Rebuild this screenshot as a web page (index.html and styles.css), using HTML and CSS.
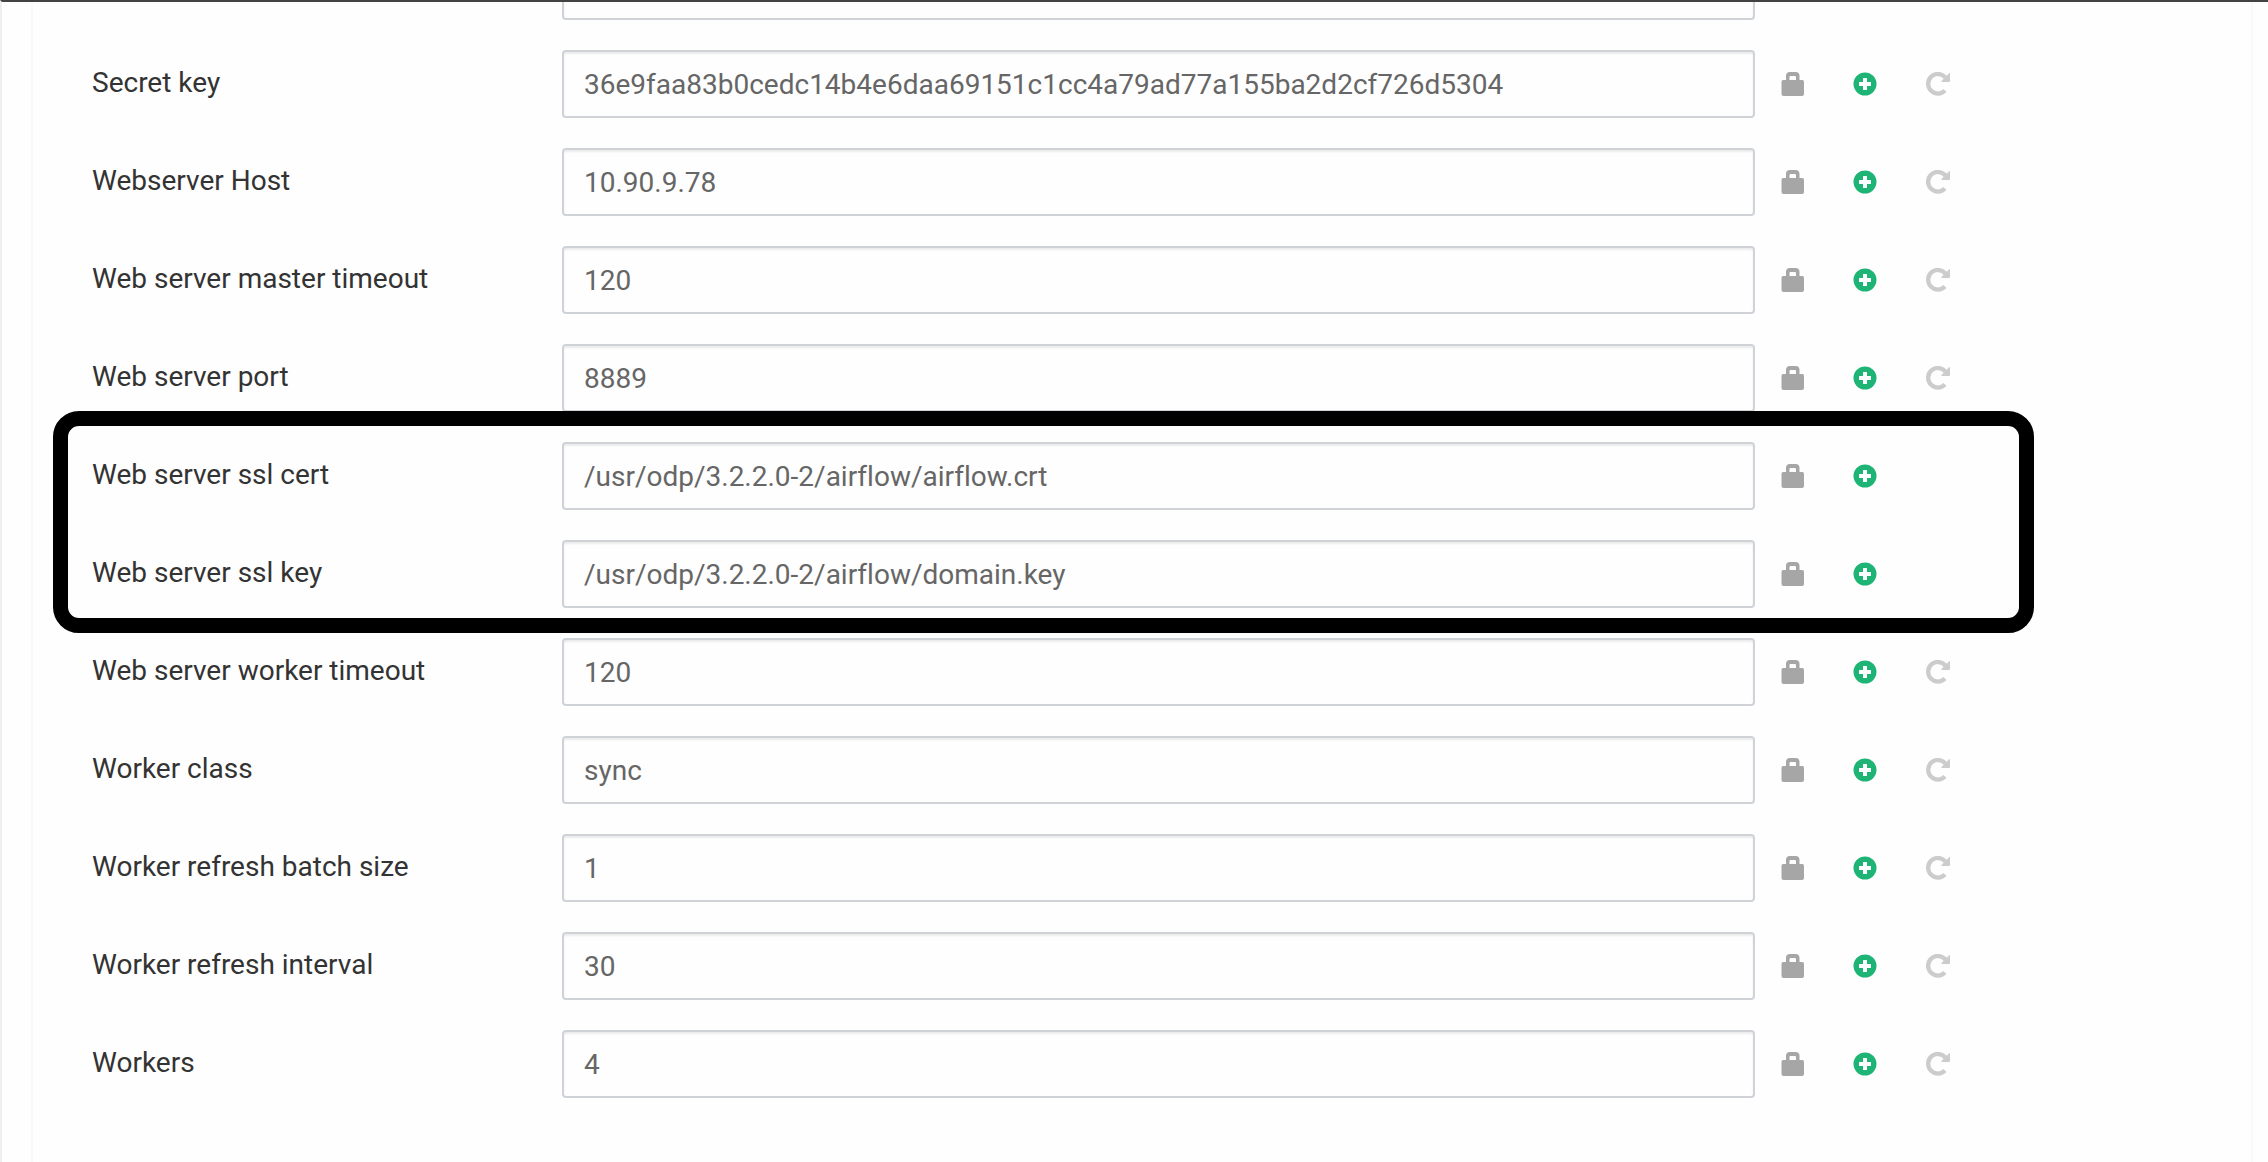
FILE: index.html
```html
<!DOCTYPE html>
<html lang="en">
<head>
    <meta charset="UTF-8" />
    <title>Airflow configs</title>
    <link rel="stylesheet" href="styles.css">
</head>
<body>
    <svg class="sprite" aria-hidden="true">
        <symbol id="lock" viewBox="0 0 24 24">
            <path fill-rule="evenodd" d="M2 8H5V4Q5 0 9 0H14.500Q18.500 0 18.500 4V8H21.500Q23 8 23 10V22Q23 24 21 24H2.500Q.5 24 .5 22V10Q.5 8 2 8ZM8.500 8H15V5Q15 4 14 4H9.500Q8.500 4 8.500 5Z"/>
        </symbol>
        <symbol id="plus" viewBox="0 0 24 24">
            <path fill-rule="evenodd" d="M12 .5A11.500 11.500 0 1 1 12 23.500A11.500 11.500 0 1 1 12 .5ZM10.500 6Q10 6 10 6.500V10H6.500Q6 10 6 10.500V13.500Q6 14 6.500 14H10V17.500Q10 18 10.500 18H13.500Q14 18 14 17.500V14H17.500Q18 14 18 13.500V10.500Q18 10 17.500 10H14V6.500Q14 6 13.500 6Z"/>
        </symbol>
        <symbol id="redo" viewBox="0 0 26 24">
            <path d="M20.500 5.500A9.800 9.800 0 1 0 20 18.600" fill="none" stroke="currentColor" stroke-width="4.300"/>
            <path d="M24.200 1.200Q25 .6 25 1.800V9Q25 10 24 10H17Q15.700 10 16.500 9Z"/>
        </symbol>
    </svg>

    <form class="panel">
        <div class="row">
            <span></span>
            <input type="text" aria-label="Previous config">
        </div>
        <div class="row">
            <label for="secret-key">Secret key</label>
            <input type="text" id="secret-key" value="36e9faa83b0cedc14b4e6daa69151c1cc4a79ad77a155ba2d2cf726d5304">
            <div class="actions">
                <button type="button" class="lock" aria-label="Lock"><svg><use href="#lock"/></svg></button>
                <button type="button" class="plus" aria-label="Override"><svg><use href="#plus"/></svg></button>
                <button type="button" class="redo" aria-label="Reset"><svg><use href="#redo"/></svg></button>
            </div>
        </div>
        <div class="row">
            <label for="host">Webserver Host</label>
            <input type="text" id="host" value="10.90.9.78">
            <div class="actions">
                <button type="button" class="lock" aria-label="Lock"><svg><use href="#lock"/></svg></button>
                <button type="button" class="plus" aria-label="Override"><svg><use href="#plus"/></svg></button>
                <button type="button" class="redo" aria-label="Reset"><svg><use href="#redo"/></svg></button>
            </div>
        </div>
        <div class="row">
            <label for="master-timeout">Web server master timeout</label>
            <input type="text" id="master-timeout" value="120">
            <div class="actions">
                <button type="button" class="lock" aria-label="Lock"><svg><use href="#lock"/></svg></button>
                <button type="button" class="plus" aria-label="Override"><svg><use href="#plus"/></svg></button>
                <button type="button" class="redo" aria-label="Reset"><svg><use href="#redo"/></svg></button>
            </div>
        </div>
        <div class="row">
            <label for="port">Web server port</label>
            <input type="text" id="port" value="8889">
            <div class="actions">
                <button type="button" class="lock" aria-label="Lock"><svg><use href="#lock"/></svg></button>
                <button type="button" class="plus" aria-label="Override"><svg><use href="#plus"/></svg></button>
                <button type="button" class="redo" aria-label="Reset"><svg><use href="#redo"/></svg></button>
            </div>
        </div>
        <div class="marked">
            <div class="row">
                <label for="ssl-cert">Web server ssl cert</label>
                <input type="text" id="ssl-cert" value="/usr/odp/3.2.2.0-2/airflow/airflow.crt">
                <div class="actions">
                    <button type="button" class="lock" aria-label="Lock"><svg><use href="#lock"/></svg></button>
                    <button type="button" class="plus" aria-label="Override"><svg><use href="#plus"/></svg></button>
                </div>
            </div>
            <div class="row">
                <label for="ssl-key">Web server ssl key</label>
                <input type="text" id="ssl-key" value="/usr/odp/3.2.2.0-2/airflow/domain.key">
                <div class="actions">
                    <button type="button" class="lock" aria-label="Lock"><svg><use href="#lock"/></svg></button>
                    <button type="button" class="plus" aria-label="Override"><svg><use href="#plus"/></svg></button>
                </div>
            </div>
        </div>
        <div class="row">
            <label for="worker-timeout">Web server worker timeout</label>
            <input type="text" id="worker-timeout" value="120">
            <div class="actions">
                <button type="button" class="lock" aria-label="Lock"><svg><use href="#lock"/></svg></button>
                <button type="button" class="plus" aria-label="Override"><svg><use href="#plus"/></svg></button>
                <button type="button" class="redo" aria-label="Reset"><svg><use href="#redo"/></svg></button>
            </div>
        </div>
        <div class="row">
            <label for="worker-class">Worker class</label>
            <input type="text" id="worker-class" value="sync">
            <div class="actions">
                <button type="button" class="lock" aria-label="Lock"><svg><use href="#lock"/></svg></button>
                <button type="button" class="plus" aria-label="Override"><svg><use href="#plus"/></svg></button>
                <button type="button" class="redo" aria-label="Reset"><svg><use href="#redo"/></svg></button>
            </div>
        </div>
        <div class="row">
            <label for="batch-size">Worker refresh batch size</label>
            <input type="text" id="batch-size" value="1">
            <div class="actions">
                <button type="button" class="lock" aria-label="Lock"><svg><use href="#lock"/></svg></button>
                <button type="button" class="plus" aria-label="Override"><svg><use href="#plus"/></svg></button>
                <button type="button" class="redo" aria-label="Reset"><svg><use href="#redo"/></svg></button>
            </div>
        </div>
        <div class="row">
            <label for="interval">Worker refresh interval</label>
            <input type="text" id="interval" value="30">
            <div class="actions">
                <button type="button" class="lock" aria-label="Lock"><svg><use href="#lock"/></svg></button>
                <button type="button" class="plus" aria-label="Override"><svg><use href="#plus"/></svg></button>
                <button type="button" class="redo" aria-label="Reset"><svg><use href="#redo"/></svg></button>
            </div>
        </div>
        <div class="row">
            <label for="workers">Workers</label>
            <input type="text" id="workers" value="4">
            <div class="actions">
                <button type="button" class="lock" aria-label="Lock"><svg><use href="#lock"/></svg></button>
                <button type="button" class="plus" aria-label="Override"><svg><use href="#plus"/></svg></button>
                <button type="button" class="redo" aria-label="Reset"><svg><use href="#redo"/></svg></button>
            </div>
        </div>
    </form>
</body>
</html>
```

FILE: styles.css
```css
*{
    box-sizing: border-box;
}
body{
    display: flex;
    height: 100vh;
    margin: 0;
    padding: 0 15px 0 29px;
    border-top: 2px solid #444243;
    border-left: 2px solid #eee;
    background: #fefefe;
    font-family: Roboto, "Liberation Sans", sans-serif;
    font-size: 28px;
    font-variant-ligatures: none;
    overflow: hidden;
}
.sprite{
    display: none;
}
/* the list is scrolled to its end, the first row is cut off at the top */
.panel{
    flex: 1;
    display: flex;
    flex-direction: column;
    justify-content: flex-end;
    gap: 30px;
    padding: 0 300px 64px 59px;
    border-left: 2px solid #f9f9f9;
    border-right: 2px solid #f9f9f9;
}
.row{
    display: grid;
    grid-template-columns: 470px 1fr 196px;
    height: 68px;
    flex-shrink: 0;
}
.row label{
    line-height: 66px;
    color: #333;
}
.row input{
    min-width: 0;
    padding: 0 20px;
    border: 2px solid #cfd3d7;
    border-radius: 4px;
    background: #fefefe;
    box-shadow: inset 0 2px 2px rgba(0,0,0,.075);
    font: inherit;
    font-variant-ligatures: none;
    color: #666;
    outline: none;
}
.actions{
    display: flex;
    align-items: center;
    gap: 48px;
    padding-left: 26px;
}
.actions button{
    width: 24px;
    height: 24px;
    padding: 0;
    border: 0;
    background: none;
    cursor: pointer;
}
.actions .redo{
    width: 26px;
}
.actions svg{
    display: block;
    width: 100%;
    height: 100%;
    fill: currentColor;
}
.actions .lock{
    color: #a6a6a6;
}
.actions .plus{
    color: #1eb475;
}
.actions .redo{
    color: #ccc;
}
.marked{
    position: relative;
    display: flex;
    flex-direction: column;
    flex-shrink: 0;
    gap: 30px;
}
.marked::after{
    content: "";
    position: absolute;
    top: -31px;
    right: -83px;
    bottom: -25px;
    left: -39px;
    border: 15px solid #000;
    border-radius: 26px;
    pointer-events: none;
}
```
